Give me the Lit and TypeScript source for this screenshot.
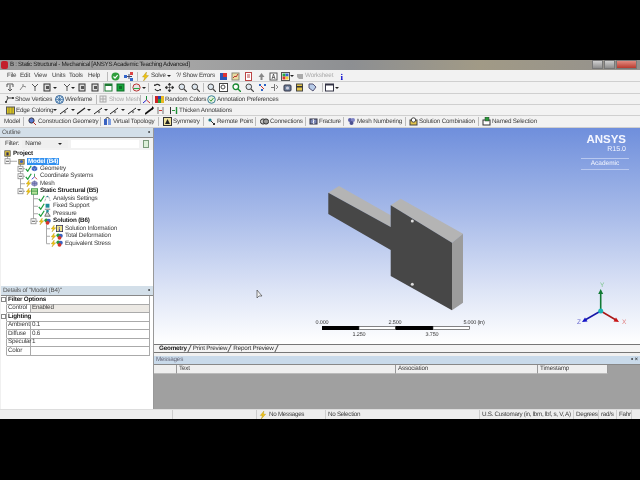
import { LitElement, css, html, svg, TemplateResult } from 'lit'
import { customElement } from 'lit/decorators.js'

type Cell = [number, TemplateResult | string | null, string?]

// small toolbar glyphs, all on a 9x9 grid
const icons: Record<string, TemplateResult> = {
   check: svg`<circle cx="4.5" cy="4.5" r="4" fill="#2f9e3c"/><path d="M2.5 4.5l1.5 1.6 2.6-3" stroke="#fff" fill="none" stroke-width="1.2"/>`,
   nodes: svg`<path d="M1 4.5h7M5 2v5" stroke="#446" fill="none"/><rect x="0" y="3" width="3" height="3" fill="#36c"/><rect x="6" y="0" width="3" height="3" fill="#d44"/><rect x="6" y="6" width="3" height="3" fill="#36c"/>`,
   bolt: svg`<path d="M5.5 0L1.5 5h2.4L2.5 9l5-5.4H5z" fill="#f2c511" stroke="#a88a10" stroke-width=".4"/>`,
   book: svg`<rect x="1" y="1" width="7" height="7" fill="#2b56b5"/><rect x="4" y="1" width="4" height="4" fill="#d33"/>`,
   chart: svg`<rect x="1" y="1" width="7" height="7" fill="#e9dca0" stroke="#887"/><path d="M2 6l2-2 1 1 2-3" stroke="#b33" fill="none"/>`,
   page: svg`<rect x="1.5" y=".5" width="6" height="8" fill="#fff" stroke="#b44"/><path d="M3 3h3M3 5h3" stroke="#b44"/>`,
   grayGear: svg`<path d="M4.5 1l3 4h-2v3h-2V5h-2z" fill="#888"/>`,
   letter: svg`<rect x="1" y="1" width="7" height="7" fill="#fff" stroke="#555"/><path d="M3 7l1.5-5L6 7M3.5 5.5h2" stroke="#333" fill="none" stroke-width=".7"/>`,
   palette: svg`<rect x=".5" y=".5" width="8" height="8" fill="#fff" stroke="#555"/><rect x="1.5" y="1.5" width="3" height="3" fill="#2a4"/><rect x="4.5" y="1.5" width="3" height="3" fill="#36c"/><rect x="1.5" y="4.5" width="3" height="3" fill="#d33"/><rect x="4.5" y="4.5" width="3" height="3" fill="#ec3"/>`,
   workGray: svg`<path d="M1 2h6v5H3L1 5z" fill="#aaa"/>`,
   select: svg`<path d="M1 1h6M1 1v3M7 1v3M4 2v6M2 6l2 2 2-2" stroke="#555" fill="none"/>`,
   selectLight: svg`<path d="M1 7l3-4 3 1M4 3V1" stroke="#888" fill="none"/>`,
   fork: svg`<path d="M1 1l3 3 3-3M4 4v4" stroke="#555" fill="none"/>`,
   cubeSel: svg`<rect x="1" y="1" width="6" height="7" fill="#ddd" stroke="#333"/><path d="M3 3h3v3H3z" fill="#555"/>`,
   cubeGreen: svg`<rect x="1" y="1" width="7" height="7" fill="#fff" stroke="#1d7a32"/><rect x="1" y="1" width="7" height="2" fill="#1d7a32"/>`,
   cubeGreenFull: svg`<rect x="1" y="1" width="7" height="7" fill="#17a63b" stroke="#0f6e28"/><path d="M3 3h3v3H3z" fill="#0f6e28"/>`,
   globe: svg`<circle cx="4.5" cy="4.5" r="3.6" fill="#e6e6e6" stroke="#b33"/><path d="M1.5 5.5h6" stroke="#2a4"/>`,
   rotate: svg`<path d="M7 3A3 3 0 0 0 2 2.5M2 6a3 3 0 0 0 5 .5" stroke="#333" fill="none" stroke-width="1.1"/><path d="M1 1l2 2H1zM8 8L6 6h2z" fill="#333"/>`,
   pan: svg`<path d="M4.5 0v9M0 4.5h9M4.5 0L3 2h3zM4.5 9L3 7h3zM0 4.5L2 3v3zM9 4.5L7 3v3z" stroke="#333" fill="#333" stroke-width=".6"/>`,
   zoom: svg`<circle cx="3.8" cy="3.8" r="2.8" fill="#dde6ee" stroke="#444"/><path d="M6 6l3 3" stroke="#444" stroke-width="1.2"/>`,
   zoomGreen: svg`<circle cx="3.8" cy="3.8" r="2.8" fill="#fff" stroke="#1b8a33" stroke-width="1.3"/><path d="M6 6l3 3" stroke="#1b8a33" stroke-width="1.3"/>`,
   zoomBox: svg`<rect x=".5" y=".5" width="8" height="8" fill="#fff" stroke="#444"/><circle cx="4" cy="4" r="2" fill="none" stroke="#444"/>`,
   dots: svg`<path d="M1 1h2v2H1zM6 1h2v2H6zM3 6h2v2H3z" fill="#2c63c4"/><path d="M3 3l3 3" stroke="#c33"/>`,
   split: svg`<path d="M4.5 1v7M1 4.5h3" stroke="#777"/><path d="M6 2l2 2-2 2" stroke="#888" fill="none"/>`,
   photo: svg`<rect x="1" y="2" width="7" height="6" rx="1" fill="#6d7f9a" stroke="#334"/><circle cx="4.5" cy="5" r="1.6" fill="#ccd"/>`,
   db: svg`<rect x="1.5" y="1" width="6" height="7" fill="#e2c34a" stroke="#444"/><rect x="1.5" y="3" width="6" height="1.5" fill="#333"/>`,
   tag: svg`<path d="M1 1h4l3 3-3 4-4-3z" fill="#b7cbe8" stroke="#557"/>`,
   frame: svg`<rect x=".5" y="1" width="8" height="7" fill="#fff" stroke="#334"/><rect x=".5" y="1" width="8" height="1.5" fill="#334"/>`,
   info: svg`<text x="2.5" y="8" font-size="9" font-weight="700" font-family="Liberation Serif" fill="#00c">i</text>`,
   vertices: svg`<path d="M1 7l2-4h5M3 3l-1-2" stroke="#444" fill="none"/><circle cx="1" cy="7" r="1" fill="#222"/><circle cx="8" cy="3" r="1" fill="#222"/>`,
   wire: svg`<circle cx="4.5" cy="4.5" r="4" fill="#cfe3ef" stroke="#2b5f98"/><path d="M.5 4.5h8M4.5.5v8M2 2l5 5M7 2L2 7" stroke="#2b5f98" stroke-width=".6"/>`,
   meshGray: svg`<rect x="1" y="1" width="6" height="6" fill="#eee" stroke="#aaa"/><path d="M1 4h6M4 1v6" stroke="#aaa"/>`,
   axes: svg`<path d="M4.5 5V1" stroke="#1a8f3b"/><path d="M4.5 5L8 8" stroke="#c33"/><path d="M4.5 5L1 8" stroke="#22c"/>`,
   colors: svg`<rect x="0" y="1" width="3" height="7" fill="#c22"/><rect x="3" y="1" width="3" height="7" fill="#2a3fb5"/><rect x="6" y="1" width="3" height="7" fill="#e8b923"/><rect x="3" y="4" width="3" height="4" fill="#2a9a3a"/>`,
   annot: svg`<circle cx="4.5" cy="4.5" r="3.8" fill="#e4f1dc" stroke="#3b7e9a"/><path d="M2.5 4.5l1.5 1.7 2.5-3.2" stroke="#3a9a3a" fill="none"/>`,
   edgeColor: svg`<rect x=".5" y="1" width="8" height="7" fill="#d8c21f" stroke="#555"/><path d="M3 1v7M6 1v7" stroke="#555" stroke-width=".5"/>`,
   edgeA: svg`<path d="M0 8l8-6" stroke="#222" stroke-width="1"/><circle cx="5" cy="6" r="1.2" fill="#888"/>`,
   edgeB: svg`<path d="M0 8l8-6" stroke="#222" stroke-width="1.2"/>`,
   edgeC: svg`<path d="M0 8l4-3 4-3" stroke="#111" stroke-width="1.6"/><path d="M7 0l2 2-2 2" fill="#111"/>`,
   thinBar: svg`<path d="M2 1v7M7 1v7" stroke="#777" stroke-width="1"/><path d="M3 4.5h3" stroke="#c33"/>`,
   thick: svg`<path d="M1.5 1v7" stroke="#333"/><path d="M3 4.5h3" stroke="#2a9a3a"/><path d="M7.5 1v7" stroke="#1d8c34" stroke-width="1.4"/>`,
   construct: svg`<circle cx="3.5" cy="3.5" r="2.6" fill="#5b7ad0" stroke="#334"/><path d="M5 5l3 3" stroke="#b33"/>`,
   vtopo: svg`<rect x="1" y="2" width="3" height="6" fill="#3a62c0"/><rect x="5" y="2" width="3" height="6" fill="#7f9ee0"/><path d="M2.5 2L4.5 0l2 2" fill="none" stroke="#333"/>`,
   symmetry: svg`<rect x=".5" y=".5" width="8" height="8" fill="#efe39d" stroke="#333"/><path d="M2 7l2.5-5L7 7z" fill="#222"/>`,
   remote: svg`<circle cx="3" cy="3" r="1.6" fill="#187a8a"/><path d="M4 4l3 3" stroke="#333"/><rect x="6" y="6" width="2" height="2" fill="#333"/>`,
   conn: svg`<circle cx="3" cy="4.5" r="2.6" fill="#ccc" stroke="#333"/><circle cx="6" cy="4.5" r="2.6" fill="#999" stroke="#333"/>`,
   fracture: svg`<rect x="1" y="2" width="7" height="5" fill="#7a86b5" stroke="#334"/><path d="M4 2l1 2-1 1 1 2" stroke="#fff" fill="none"/>`,
   meshNum: svg`<circle cx="3" cy="3" r="2" fill="#5a5fa8"/><circle cx="6" cy="3" r="2" fill="#7f84c6"/><circle cx="4.5" cy="6" r="2" fill="#4a4f90"/>`,
   solCombo: svg`<rect x="1" y="3" width="7" height="5" fill="#e2c34a" stroke="#444"/><circle cx="4.5" cy="3" r="2.2" fill="#fff" stroke="#444"/>`,
   named: svg`<rect x="1" y="3" width="7" height="5" fill="#fff" stroke="#333"/><rect x="3" y="0" width="4" height="4" fill="#2a9a3a" stroke="#333" stroke-width=".5"/>`,
   project: svg`<rect x="1" y="1" width="7" height="7" fill="#e8c93a" stroke="#555"/><rect x="3" y="3" width="3" height="4" fill="#335"/>`,
   model: svg`<rect x="1" y="2" width="7" height="6" fill="#c9a94c" stroke="#665"/><circle cx="4.5" cy="4.5" r="2" fill="#3a5fc0"/>`,
   geom: svg`<path d="M4.5 1L8 3v3.5L4.5 8 1 6.5V3z" fill="#3a62c0"/><path d="M1 3l3.5 2L8 3M4.5 5v3" stroke="#c8d4f0" stroke-width=".5" fill="none"/>`,
   coord: svg`<path d="M4.5 5V1" stroke="#1a8f3b"/><path d="M4.5 5L8 8" stroke="#c33"/><path d="M4.5 5L1 8" stroke="#22c"/>`,
   mesh: svg`<path d="M4.5 1L8 3v3.5L4.5 8 1 6.5V3z" fill="#8c90c8" stroke="#55588a" stroke-width=".5"/><path d="M1 4.5h7M4.5 1v7" stroke="#55588a" stroke-width=".5"/>`,
   structural: svg`<rect x=".5" y="1" width="8" height="7" fill="#b6e39a" stroke="#2a8a3a"/><path d="M.5 4h8" stroke="#2a8a3a"/>`,
   analysis: svg`<path d="M1 8L3 2h3l2 6" fill="none" stroke="#667" stroke-dasharray="1 1"/><circle cx="4.5" cy="2" r="1" fill="#2a8a9a"/>`,
   support: svg`<rect x="2" y="1" width="5" height="5" fill="#1e8c99"/><path d="M1 8h7" stroke="#555"/>`,
   pressure: svg`<path d="M1 8l3-6 4 6z" fill="#ddd" stroke="#555"/><rect x="3" y="0" width="3" height="3" fill="#1e8c99"/>`,
   solution: svg`<circle cx="3" cy="3" r="2.5" fill="#2e9b3a"/><circle cx="6.2" cy="3.5" r="2.5" fill="#3a62c0"/><circle cx="4.5" cy="6.2" r="2.5" fill="#d8352a"/>`,
   solInfo: svg`<rect x=".5" y=".5" width="8" height="8" fill="#f2e68c" stroke="#335"/><text x="3.2" y="7.5" font-size="7" font-weight="700" font-family="Liberation Serif" fill="#00a">i</text>`,
}

const ic = (name: string) => html`<svg class="ic" viewBox="0 0 9 9" width="9" height="9">${icons[name]}</svg>`
const caret = html`<span class="caret"></span>`
const sep = html`<span class="sep"></span>`
const label = (icon: string, text: string) => html`${ic(icon)}<span class="lbl">${text}</span>`

const menuRow: Cell[] = [
   [7, 'File'], [20, 'Edit'], [34, 'View'], [52, 'Units'], [69, 'Tools'], [88, 'Help'], [107, sep],
   [111, ic('check')], [124, ic('nodes')], [137, sep], [141, label('bolt', 'Solve')], [167, caret],
   [176, '?/ Show Errors'], [219, ic('book')], [231, ic('chart')], [244, ic('page')], [257, ic('grayGear')],
   [269, ic('letter')], [281, ic('palette')], [290, caret], [296, html`${ic('workGray')}<span class="off">Worksheet</span>`],
   [338, ic('info')], [349, null],
]
const viewRow: Cell[] = [
   [6, ic('select')], [19, ic('selectLight')], [31, ic('fork')], [43, ic('cubeSel')], [53, caret], [63, ic('fork')], [71, caret],
   [78, ic('cubeSel')], [91, ic('cubeSel')], [103, sep], [104, ic('cubeGreen')], [116, ic('cubeGreenFull')], [130, sep],
   [132, ic('globe')], [142, caret], [148, sep], [153, ic('rotate')], [165, ic('pan')], [178, ic('zoom')], [191, ic('zoom')], [203, sep],
   [207, ic('zoom')], [219, ic('zoomBox')], [232, ic('zoomGreen')], [245, ic('zoom')], [258, ic('dots')], [270, ic('split')],
   [283, ic('photo')], [295, ic('db')], [308, ic('tag')], [322, sep], [325, ic('frame')], [335, caret], [342, null],
]
const displayRow: Cell[] = [
   [5, label('vertices', 'Show Vertices')], [55, label('wire', 'Wireframe')], [96, sep],
   [99, html`${ic('meshGray')}<span class="off lbl">Show Mesh</span>`], [140, sep], [142, ic('axes')], [152, sep],
   [155, label('colors', 'Random Colors')], [207, label('annot', 'Annotation Preferences')], [280, null],
]
const edgeRow: Cell[] = [
   [6, label('edgeColor', 'Edge Coloring')], [53, caret], [60, ic('edgeA')], [71, caret], [77, ic('edgeB')], [87, caret],
   [94, ic('edgeA')], [104, caret], [110, ic('edgeA')], [121, caret], [128, ic('edgeA')], [137, caret], [145, ic('edgeC')],
   [156, ic('thinBar')], [169, label('thick', 'Thicken Annotations')], [235, null],
]
const modelRow: Cell[] = [
   [4, 'Model'], [23, sep], [28, label('construct', 'Construction Geometry')], [100, sep], [103, label('vtopo', 'Virtual Topology')], [158, sep],
   [163, label('symmetry', 'Symmetry')], [203, sep], [207, label('remote', 'Remote Point')], [255, sep], [260, label('conn', 'Connections')], [305, sep],
   [309, label('fracture', 'Fracture')], [343, sep], [347, label('meshNum', 'Mesh Numbering')], [405, sep], [409, label('solCombo', 'Solution Combination')], [478, sep],
   [482, label('named', 'Named Selection')], [540, null],
]

interface Node { x: number; status?: string; icon: string; text: string; bold?: boolean; sel?: boolean }
const tree: Node[] = [
   { x: 3, icon: 'project', text: 'Project', bold: true },
   { x: 17, icon: 'model', text: 'Model (B4)', bold: true, sel: true },
   { x: 24, status: 'ok', icon: 'geom', text: 'Geometry' },
   { x: 24, status: 'ok', icon: 'coord', text: 'Coordinate Systems' },
   { x: 24, status: 'bolt', icon: 'mesh', text: 'Mesh' },
   { x: 24, status: 'bolt', icon: 'structural', text: 'Static Structural (B5)', bold: true },
   { x: 37, status: 'ok', icon: 'analysis', text: 'Analysis Settings' },
   { x: 37, status: 'ok', icon: 'support', text: 'Fixed Support' },
   { x: 37, status: 'ok', icon: 'pressure', text: 'Pressure' },
   { x: 37, status: 'bolt', icon: 'solution', text: 'Solution (B6)', bold: true },
   { x: 49, status: 'bolt', icon: 'solInfo', text: 'Solution Information' },
   { x: 49, status: 'bolt', icon: 'solution', text: 'Total Deformation' },
   { x: 49, status: 'bolt', icon: 'solution', text: 'Equivalent Stress' },
]
const rowY = (i: number) => 3.75 + 7.5 * i

const details = [
   { group: 'Filter Options' },
   { key: 'Control', value: 'Enabled', shade: true },
   { group: 'Lighting' },
   { key: 'Ambient', value: '0.1' },
   { key: 'Diffuse', value: '0.6' },
   { key: 'Specular', value: '1' },
   { key: 'Color', value: '' },
]

@customElement('app-root')
export class AppRoot extends LitElement {
   static styles = css`
      :host { display: block; width: 640px; height: 480px; background: #000; overflow: hidden; }
      .app {
         margin-top: 60px; height: 359px; display: flex; flex-direction: column; background: #f0f0f0;
         font: 6.3px/8px "Liberation Sans", sans-serif; letter-spacing: -0.2px; color: #3c3c3c; filter: blur(0.3px); text-rendering: geometricPrecision;
      }
      .title {
         height: 10px; flex: none; display: flex; align-items: center; gap: 2px; padding-left: 1px; color: #222; font-size: 6.2px; letter-spacing: -0.29px;
         background: linear-gradient(90deg, #9a9a9a, #a4a4a4 30%, #8d8f92 55%, #a19a86 75%, #93918e);
      }
      .logo { width: 7px; height: 8px; border-radius: 2px; background: #c3202c; }
      .title-text { flex: 1; }
      .wbtns { display: flex; gap: 1px; height: 9px; align-self: flex-start; margin-right: 3px; }
      .wbtn { width: 11px; background: linear-gradient(#cfcfcf, #8e8e8e); border: 1px solid #777; box-sizing: border-box; }
      .wbtn.close { width: 21px; background: linear-gradient(#e28a80, #b93a2e); }
      .row { flex: none; height: 12px; display: flex; align-items: center; border-bottom: 1px solid #cfcfcf; box-sizing: border-box; background: #f2f2f2; }
      .r-menu { padding-top: 1px; }
      .r-display { height: 11px; }
      .r-edge { height: 11px; }
      .r-display .lbl, .r-edge .lbl { margin-top: 2px; }
      .cell { flex: none; display: flex; align-items: center; white-space: nowrap; }
      .ic { flex: none; display: block; }
      .lbl { margin-left: 1px; }
      .off { color: #aaa; }
      .caret { width: 0; height: 0; border: 2px solid transparent; border-top-color: #222; border-bottom: 0; }
      .sep { width: 1px; height: 9px; background: #bbb; }
      .main { flex: 1; min-height: 0; display: flex; }
      .left { flex: none; width: 154px; display: flex; flex-direction: column; background: #f0f0f0; border-right: 1px solid #999; box-sizing: border-box; }
      .phead { flex: none; height: 9px; display: flex; align-items: center; justify-content: space-between; padding: 0 3px 0 2px; background: #d3dfe9; color: #555; border-bottom: 1px solid #888; }
      .pin { color: #222; }
      .outline { height: 148px; flex: none; display: flex; flex-direction: column; margin-left: 1px; background: #fff; }
      .filter { flex: none; height: 12px; display: flex; align-items: center; gap: 3px; padding-left: 4px; background: #f2f2f2; }
      .combo { width: 46px; height: 8px; display: flex; justify-content: space-between; align-items: center; padding: 0 6px 0 3px; box-sizing: border-box; background: #efefef; }
      .finput { width: 68px; height: 8px; background: #fff; }
      .fbtn { width: 6px; height: 8px; background: #dcefd8; border: 1px solid #7a9a7a; box-sizing: border-box; margin-left: 1px; }
      .tree { position: relative; flex: 1; }
      .lines { position: absolute; left: 0; top: 0; }
      .node { position: relative; height: 7.5px; display: flex; align-items: center; white-space: nowrap; }
      .node .ic { width: 7px; height: 7px; margin-right: 2px; }
      .node .st { width: 7px; height: 7px; margin-right: -1px; }
      .bold { font-weight: 700; color: #222; }
      .sel { background: #3090f0; color: #fff; padding: 0 1px; line-height: 7.5px; }
      .details { flex: 1; display: flex; flex-direction: column; min-height: 0; background: #fff; margin-left: 1px; }
      .dgrid { display: grid; grid-template-columns: 6px 24px 1fr; margin-right: 3px; }
      .dgrid > div { height: 8.5px; box-sizing: border-box; display: flex; align-items: center; padding-left: 1px; border-bottom: 1px solid #aaa; border-right: 1px solid #aaa; }
      .dgrid .sq { border-bottom-color: transparent; justify-content: center; padding: 0; }
      .dgrid .group { grid-column: 2 / 4; font-weight: 700; color: #222; }
      .dgrid .shade { background: #ece9e4; }
      .box { display: block; width: 3px; height: 3px; border: 1px solid #888; background: #fff; }
      .view {
         position: relative; flex: none; height: 216px; overflow: hidden;
         background: linear-gradient(#6f8fdc 0%, #a8bbe9 40%, #dde4f6 75%, #ffffff 100%);
      }
      .right { flex: 1; display: flex; flex-direction: column; min-width: 0; }
      .canvas { position: absolute; left: 0; top: 0; }
      .brand { position: absolute; right: 14px; top: 6px; text-align: right; color: #f4f6ff; width: 42px; letter-spacing: 0; }
      .brand b { display: block; font: 700 11.5px/12px "Liberation Sans", sans-serif; }
      .brand span { display: block; font-size: 7px; line-height: 8px; }
      .brand em {
         display: block; font-style: normal; font-size: 6.5px; text-align: center; margin: 4px -3px 0 -3px; padding: 1px 0;
         border-top: 1px solid #b8c8f0; border-bottom: 1px solid #b8c8f0;
      }
      .tabs { flex: none; height: 9px; display: flex; align-items: center; background: #f4f4f4; border-top: 1px solid #777; border-bottom: 1px solid #777; box-sizing: border-box; padding-left: 5px; }
      .tab { position: relative; white-space: nowrap; color: #333; line-height: 7px; margin-right: 6px; }
      .tab::after { content: ""; position: absolute; right: -3px; top: 0; width: 1px; height: 7px; background: #555; transform: skewX(-25deg); }
      .tab.on { font-weight: 700; color: #222; }
      .msgs { flex: 1; display: flex; flex-direction: column; margin-top: 3px; background: #a0a0a0; }
      .mhead { height: 9px; flex: none; display: flex; align-items: center; justify-content: space-between; padding: 0 2px; background: #c9daea; color: #667; border-bottom: 1px solid #888; box-sizing: border-box; }
      .cols { display: flex; height: 9px; flex: none; }
      .cols span { flex: none; box-sizing: border-box; display: flex; align-items: center; padding-left: 2px; background: #efefef; border-right: 1px solid #999; border-bottom: 1px solid #bbb; height: 9px; }
      .status { flex: none; height: 10px; display: flex; align-items: center; background: #ededed; border-top: 1px solid #ddd; box-sizing: border-box; letter-spacing: -0.3px; }
      .status .s { flex: none; height: 100%; display: flex; align-items: center; border-right: 1px solid #ccc; box-sizing: border-box; padding-left: 2px; white-space: nowrap; }
      .status .ic { width: 8px; height: 8px; margin-right: 2px; }
   `

   private row(cells: Cell[], cls: string) {
      return html`<div class="row ${cls}">
         ${cells.slice(0, -1).map(([x, content], i) => {
            const pad = i === 0 ? x : 0
            return html`<span class="cell" style="width:${cells[i + 1][0] - x}px;margin-left:${pad}px">${content}</span>`
         })}
      </div>`
   }

   private lines() {
      const y = rowY
      const hs: [number, number, number][] = [
         [6.5, 16, y(1)], [19.5, 24, y(2)], [19.5, 24, y(3)], [19.5, 24, y(4)], [19.5, 24, y(5)],
         [32.5, 37, y(6)], [32.5, 37, y(7)], [32.5, 37, y(8)], [32.5, 37, y(9)],
         [45.5, 49, y(10)], [45.5, 49, y(11)], [45.5, 49, y(12)],
      ]
      const vs: [number, number, number][] = [
         [6.5, y(0) + 3, y(1)], [19.5, y(1) + 3, y(5)], [32.5, y(5) + 3, y(9)], [45.5, y(9) + 3, y(12)],
      ]
      const boxes: [number, number][] = [[6.5, y(1)], [19.5, y(2)], [19.5, y(3)], [19.5, y(5)], [32.5, y(9)]]
      return html`<svg class="lines" width="150" height="100" viewBox="0 0 150 100">
         ${hs.map(([a, b, c]) => svg`<path d="M${a} ${c}H${b}" stroke="#aaa"/>`)}
         ${vs.map(([x, a, b]) => svg`<path d="M${x} ${a}V${b}" stroke="#aaa"/>`)}
         ${boxes.map(([x, c]) => svg`<rect x=${x - 2.5} y=${c - 2.5} width="5" height="5" fill="#fff" stroke="#888" stroke-width=".8"/><path d="M${x - 1.5} ${c}h3" stroke="#333" stroke-width=".8"/>`)}
      </svg>`
   }

   private part() {
      // viewBox keeps page coordinates, the part sits on a free canvas
      return html`<svg class="canvas" width="485" height="216" viewBox="155 127 485 216">
         <polygon points="329.300,191.700 340,185 391.700,214.300 391.700,226" fill="#b4b4b4"/>
         <polygon points="391.700,204.300 401.700,197.700 464,232.700 453,241.700" fill="#b4b4b4"/>
         <polygon points="453,241.700 464,232.700 464,301.700 453,309.300" fill="#9c9c9c"/>
         <polygon points="329.300,191.700 391.700,226 391.700,204.300 453,241.700 453,309.300 391.700,275 391.700,249 329.300,213" fill="#474747"/>
         <circle cx="413.300" cy="220" r="1.500" fill="#ddd"/>
         <circle cx="413.300" cy="283.300" r="1.500" fill="#ddd"/>
         <path d="M258 289v8l2-2h3z" fill="#eee" stroke="#333" stroke-width=".6"/>
         <path d="M601.700 310V292" stroke="#127a34" stroke-width="1.600"/>
         <path d="M601.700 288l-2.500 5h5z" fill="#127a34"/>
         <path d="M601.700 310L617 319" stroke="#a81818" stroke-width="1.500"/>
         <path d="M620 321l-5.500-.5 2.500-4z" fill="#c81414"/>
         <path d="M601.700 310L586 319" stroke="#1616a8" stroke-width="1.500"/>
         <path d="M583 321l5.500-.5-2.500-4z" fill="#1414c8"/>
         <circle cx="601.700" cy="310" r="2.500" fill="#1ab4b4"/>
         <g font-family="Liberation Sans" font-size="6.500">
            <text x="601" y="286" fill="#7bc48a">Y</text>
            <text x="623" y="323" fill="#e08080">X</text>
            <text x="578" y="323" fill="#6a6ad0">Z</text>
         </g>
         <rect x="323" y="325" width="37" height="4" fill="#000"/>
         <rect x="360" y="325.500" width="36.500" height="3" fill="#fff" stroke="#333" stroke-width=".6"/>
         <rect x="396.500" y="325" width="37.500" height="4" fill="#000"/>
         <rect x="434" y="325.500" width="36.500" height="3" fill="#fff" stroke="#333" stroke-width=".6"/>
         <g font-family="Liberation Sans" font-size="5.500" fill="#333" text-anchor="middle">
            <text x="323" y="323">0.000</text>
            <text x="396" y="323">2.500</text>
            <text x="475" y="323">5.000 (in)</text>
            <text x="360" y="335">1.250</text>
            <text x="433" y="335">3.750</text>
         </g>
      </svg>`
   }

   render() {
      return html`<div class="app">
         <div class="title">
            <span class="logo"></span>
            <span class="title-text">B : Static Structural - Mechanical [ANSYS Academic Teaching Advanced]</span>
            <div class="wbtns"><span class="wbtn"></span><span class="wbtn"></span><span class="wbtn close"></span></div>
         </div>
         ${this.row(menuRow, 'r-menu')}
         ${this.row(viewRow, 'r-view')}
         ${this.row(displayRow, 'r-display')}
         ${this.row(edgeRow, 'r-edge')}
         ${this.row(modelRow, 'r-model')}
         <div class="main">
            <div class="left">
               <div class="phead"><span>Outline</span><span class="pin">▪</span></div>
               <div class="outline">
                  <div class="filter">
                     <span>Filter:</span>
                     <span class="combo"><span>Name</span>${caret}</span>
                     <span class="finput"></span><span class="fbtn"></span>
                  </div>
                  <div class="tree">
                     ${this.lines()}
                     ${tree.map(n => html`<div class="node" style="padding-left:${n.x}px">
                        ${n.status ? html`<svg class="ic st" viewBox="0 0 9 9">${n.status === 'ok'
                           ? svg`<path d="M1 5l2.500 3L8 1" stroke="#1f9e3c" fill="none" stroke-width="1.600"/>`
                           : icons.bolt}</svg>` : ''}
                        ${ic(n.icon)}
                        <span class="${n.bold ? 'bold' : ''} ${n.sel ? 'sel' : ''}">${n.text}</span>
                     </div>`)}
                  </div>
               </div>
               <div class="details">
                  <div class="phead"><span>Details of "Model (B4)"</span><span class="pin">▪</span></div>
                  <div class="dgrid">
                     ${details.map(d => d.group
                        ? html`<div class="sq"><span class="box"></span></div><div class="group">${d.group}</div>`
                        : html`<div class="sq"></div><div>${d.key}</div><div class="${d.shade ? 'shade' : ''}">${d.value}</div>`)}
                  </div>
               </div>
            </div>
            <div class="right">
               <div class="view">
                  ${this.part()}
                  <div class="brand"><b>ANSYS</b><span>R15.0</span><em>Academic</em></div>
               </div>
               <div class="tabs">
                  <span class="tab on">Geometry</span><span class="tab">Print Preview</span><span class="tab">Report Preview</span>
               </div>
               <div class="msgs">
                  <div class="mhead"><span>Messages</span><span class="pin">▪ ×</span></div>
                  <div class="cols">
                     <span style="width:23px"></span><span style="width:219px">Text</span><span style="width:142px">Association</span><span style="width:70px">Timestamp</span>
                  </div>
               </div>
            </div>
         </div>
         <div class="status">
            <span class="s" style="width:173px"></span>
            <span class="s" style="width:84px"></span>
            <span class="s" style="width:69px">${ic('bolt')}No Messages</span>
            <span class="s" style="width:154px">No Selection</span>
            <span class="s" style="width:94px">U.S. Customary (in, lbm, lbf, s, V, A)</span>
            <span class="s" style="width:25px">Degrees</span>
            <span class="s" style="width:18px">rad/s</span>
            <span class="s">Fahr</span>
         </div>
      </div>`
   }
}
